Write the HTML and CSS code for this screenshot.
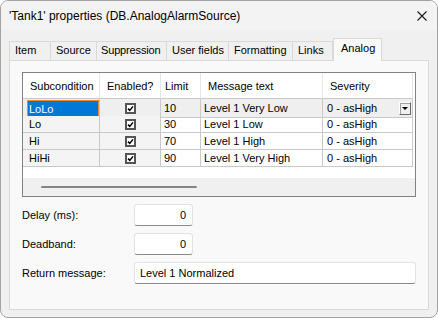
FILE: index.html
```html
<!DOCTYPE html>
<html>
    <head>
        <title>'Tank1' properties</title>
        <meta name="viewport" content="width=device-width, initial-scale=1.0">
        <link rel="stylesheet" href="styles.css">
    </head>
    <body>
        <div class="window">
            <div class="titlebar">
                <span class="title">'Tank1' properties (DB.AnalogAlarmSource)</span>
                <svg class="close" width="10" height="10" viewBox="0 0 10 10">
                    <path d="M0.5 0.5 L9.5 9.5 M9.5 0.5 L0.5 9.5" stroke="#1a1a1a" stroke-width="1.1" fill="none"/>
                </svg>
            </div>

            <div class="tabs">
                <div class="tab">Item</div>
                <div class="tab">Source</div>
                <div class="tab">Suppression</div>
                <div class="tab">User fields</div>
                <div class="tab">Formatting</div>
                <div class="tab">Links</div>
                <div class="tab active">Analog</div>
            </div>

            <div class="panel">
                <!-- Subcondition grid -->
                <div class="grid">
                    <div class="row head">
                        <div class="cell">Subcondition</div>
                        <div class="cell">Enabled?</div>
                        <div class="cell limit-head">Limit</div>
                        <div class="cell">Message text</div>
                        <div class="cell">Severity</div>
                    </div>
                    <div class="row current">
                        <div class="cell name"><span class="selected">LoLo</span></div>
                        <div class="cell check"><span class="box"><svg width="7" height="7" viewBox="0 0 7 7"><path d="M1 3.6 L2.8 5.4 L6 1.4" stroke="#000" stroke-width="1.5" fill="none"/></svg></span></div>
                        <div class="cell">10</div>
                        <div class="cell">Level 1 Very Low</div>
                        <div class="cell severity">0 - asHigh <span class="drop"><span class="arrow"></span></span></div>
                    </div>
                    <div class="row">
                        <div class="cell name">Lo</div>
                        <div class="cell check"><span class="box"><svg width="7" height="7" viewBox="0 0 7 7"><path d="M1 3.6 L2.8 5.4 L6 1.4" stroke="#000" stroke-width="1.5" fill="none"/></svg></span></div>
                        <div class="cell">30</div>
                        <div class="cell">Level 1 Low</div>
                        <div class="cell severity">0 - asHigh</div>
                    </div>
                    <div class="row">
                        <div class="cell name">Hi</div>
                        <div class="cell check"><span class="box"><svg width="7" height="7" viewBox="0 0 7 7"><path d="M1 3.6 L2.8 5.4 L6 1.4" stroke="#000" stroke-width="1.5" fill="none"/></svg></span></div>
                        <div class="cell">70</div>
                        <div class="cell">Level 1 High</div>
                        <div class="cell severity">0 - asHigh</div>
                    </div>
                    <div class="row">
                        <div class="cell name">HiHi</div>
                        <div class="cell check"><span class="box"><svg width="7" height="7" viewBox="0 0 7 7"><path d="M1 3.6 L2.8 5.4 L6 1.4" stroke="#000" stroke-width="1.5" fill="none"/></svg></span></div>
                        <div class="cell">90</div>
                        <div class="cell">Level 1 Very High</div>
                        <div class="cell severity">0 - asHigh</div>
                    </div>
                    <div class="filler"></div>
                    <div class="hscroll"><span class="thumb"></span></div>
                </div>

                <!-- Fields -->
                <div class="fields">
                    <label class="field">
                        <span class="label">Delay (ms):</span>
                        <span class="input short num">0</span>
                    </label>
                    <label class="field">
                        <span class="label">Deadband:</span>
                        <span class="input short num">0</span>
                    </label>
                    <label class="field">
                        <span class="label">Return message:</span>
                        <span class="input wide">Level 1 Normalized</span>
                    </label>
                </div>
            </div>
        </div>
    </body>
</html>
```

FILE: styles.css
```css
/* ---- General ---- */
* {
    box-sizing: border-box;
    font-family: "Segoe UI", "Liberation Sans", Arial, sans-serif;
}

body {
    margin: 0;
    font-size: 11px;
    color: #000;
}

.window {
    width: 438px;
    height: 318px;
    background-color: #f0f0f0;
    border: 1px solid #a3a3a3;
    border-radius: 8px;
    display: flex;
    flex-direction: column;
    overflow: hidden;
}

/* ---- Title bar ---- */
.titlebar {
    height: 29px;
    background-color: #f3f3f3;
    display: flex;
    align-items: center;
    justify-content: space-between;
    padding-left: 8px;
    padding-right: 10px;
}

.title {
    font-size: 12px;
    padding-top: 1px;
}

.close {
    margin-top: 1px;
}

/* ---- Tabs ---- */
.tabs {
    display: flex;
    align-items: flex-end;
    height: 30px;
    padding-left: 8px;
}

.tab {
    height: 19px;
    border: 1px solid #d9d9d9;
    border-bottom: 0px;
    margin-left: -1px;
    padding-left: 5px;
    padding-top: 2px;
    background-color: #f0f0f0;
    white-space: nowrap;
    overflow: hidden;
}

.tab:first-child { margin-left: 0px; width: 42px; }
.tab:nth-child(2) { width: 47px; }
.tab:nth-child(3) { width: 71px; padding-left: 4px; letter-spacing: -0.15px; }
.tab:nth-child(4) { width: 63px; }
.tab:nth-child(5) { width: 65px; }
.tab:nth-child(6) { width: 41px; }

.tab.active {
    width: 49px;
    height: 23px;
    margin-bottom: -1px;
    margin-left: 0px;
    padding-left: 7px;
    padding-top: 3px;
    background-color: #f9f9f9;
    position: relative;
    z-index: 1;
}

/* ---- Panel ---- */
.panel {
    margin: 0 8px;
    height: 250px;
    background-color: #f9f9f9;
    border: 1px solid #d9d9d9;
    padding: 11px 12px;
}

/* ---- Grid ---- */
.grid {
    border: 1px solid #828282;
    background-color: #fff;
}

.row {
    display: grid;
    grid-template-columns: 77px 61px 40px 122px 90px;
    height: 17px;
}

.cell {
    border-right: 1px solid #c9c9c9;
    border-bottom: 1px solid #c9c9c9;
    padding-left: 3px;
    display: flex;
    align-items: center;
    white-space: nowrap;
}

.row.head {
    height: 26px;
}

.head .cell {
    border-right-color: #e6e6e6;
    border-bottom-color: #c9c9c9;
    padding-left: 7px;
}

.head .limit-head {
    padding-left: 4px;
}

.cell.name {
    background-color: #f4f4f4;
    padding-left: 6px;
}

.row.current .cell {
    background-color: #efefef;
}

.row.current .cell.name {
    padding-left: 4px;
}

.selected {
    display: flex;
    align-items: center;
    height: 17px;
    width: 73px;
    margin-top: 1px;
    padding-left: 1px;
    background-color: #0078d7;
    border: 1px solid #e8892e;
    color: #fff;
}

.cell.check {
    justify-content: center;
    padding-left: 0px;
    background-color: #f4f4f4;
}

.box {
    width: 11px;
    height: 11px;
    border: 2px solid #555;
    background-color: #fff;
    display: flex;
    align-items: center;
    justify-content: center;
}

.cell.severity {
    justify-content: space-between;
    padding-left: 4px;
    padding-right: 1px;
}

.drop {
    width: 12px;
    height: 13px;
    background-color: #f0f0f0;
    border: 1px solid;
    border-color: #fff #6a6a6a #6a6a6a #fff;
    box-shadow: 1px 1px 0 #a0a0a0 inset;
    display: flex;
    align-items: center;
    justify-content: center;
}

.arrow {
    width: 0;
    height: 0;
    border-left: 3px solid transparent;
    border-right: 3px solid transparent;
    border-top: 3px solid #000;
}

.filler {
    height: 11px;
}

.hscroll {
    height: 18px;
    background-color: #f0f0f0;
    padding-left: 18px;
    display: flex;
    align-items: center;
}

.thumb {
    width: 156px;
    height: 2px;
    border-radius: 1px;
    background-color: #858585;
}

/* ---- Fields ---- */
.fields {
    display: flex;
    flex-direction: column;
    gap: 7px;
    margin-top: 7px;
}

.field {
    display: flex;
    align-items: center;
    height: 22px;
}

.label {
    width: 112px;
}

.input {
    height: 22px;
    background-color: #fff;
    border: 1px solid #e3e3e3;
    border-bottom-color: #8a8a8a;
    border-radius: 3px;
    display: flex;
    align-items: center;
    padding: 0 6px 1px 5px;
}

.input.short {
    width: 59px;
}

.input.num {
    justify-content: flex-end;
}

.input.wide {
    width: 282px;
}
```
